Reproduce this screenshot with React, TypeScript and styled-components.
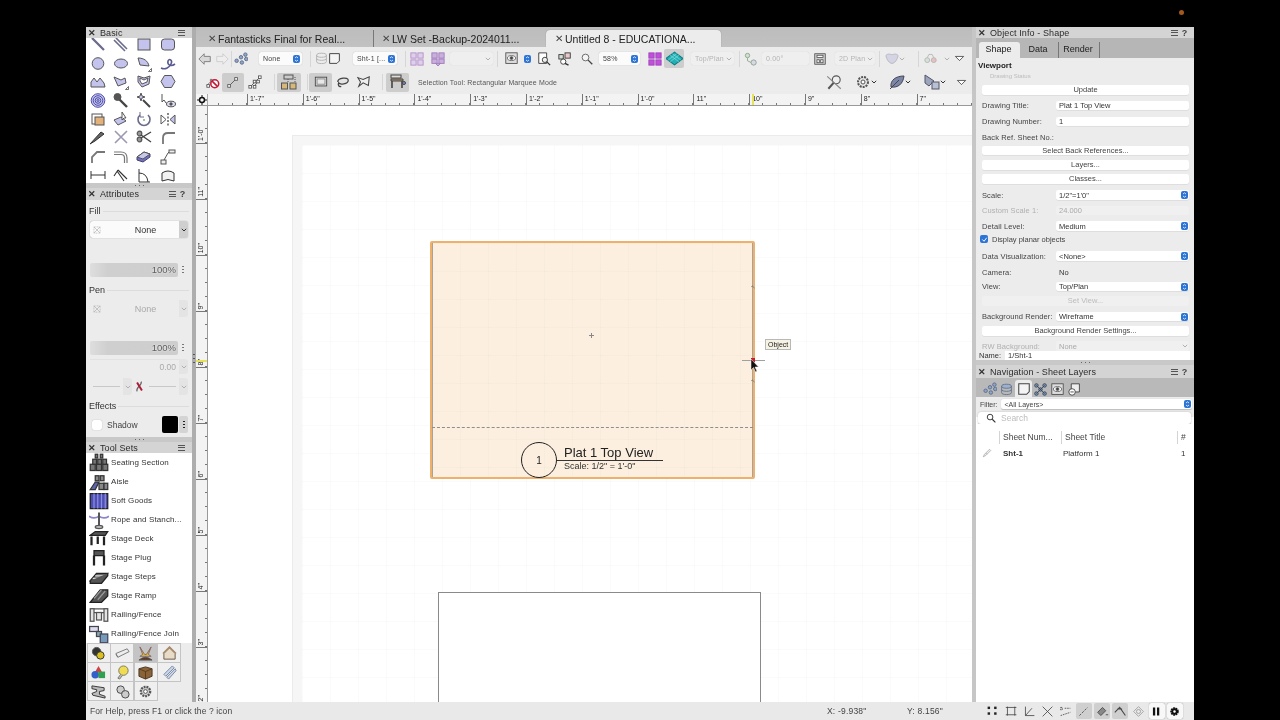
import styled, { createGlobalStyle } from "styled-components";
import type { ReactNode } from "react";

const GlobalStyle = createGlobalStyle`
    html, body {
        margin: 0;
        padding: 0;
        background: #000;
    }
    * {
        box-sizing: border-box;
    }
`;

const Screen = styled.div`
    position: relative;
    width: 1280px;
    height: 720px;
    padding: 27px 86px 0;
    background: #000;
    overflow: hidden;
    font-family: "Liberation Sans", Arial, sans-serif;
    color: #333;
    filter: blur(0.35px);
`;

const CameraDot = styled.div`
    position: absolute;
    left: 1179px;
    top: 10px;
    width: 5px;
    height: 5px;
    border-radius: 50%;
    background: #a4591c;
`;

const AppWindow = styled.div`
    display: flex;
    flex-direction: column;
    height: 693px;
`;

const Workspace = styled.div`
    display: flex;
    height: 675px;
`;

const LeftDock = styled.div`
    display: flex;
    flex-direction: column;
    width: 106px;
    background: #ececec;
`;

const Gutter = styled.div<{ $dark?: boolean }>`
    position: relative;
    width: 4px;
    background: ${(p) => (p.$dark ? "#adadad" : "#c6c6c6")};
`;

const GutterGrip = styled.div<{ $top: number }>`
    position: absolute;
    top: ${(p) => p.$top}px;
    left: 1px;
    width: 2px;
    height: 12px;
    background: repeating-linear-gradient(to bottom, #555 0 1px, transparent 1px 4px);
`;

const PanelHeader = styled.div<{ $h?: number }>`
    display: flex;
    align-items: center;
    height: ${(p) => p.$h ?? 11}px;
    padding: 0 5px 0 1px;
    background: #d4d4d4;
    font-size: 9px;
    letter-spacing: 0.1px;
    color: #2c2c2c;
    flex-shrink: 0;
`;

const CloseMark = styled.span`
    width: 10px;
    font-size: 9px;
    font-weight: bold;
    text-align: center;
    margin-right: 3px;
    color: #333;
`;

const HeaderTitle = styled.span`
    flex: 1;
    white-space: nowrap;
`;

const MenuBars = styled.span`
    width: 7px;
    height: 6px;
    margin-right: 2px;
    border-top: 1px solid #555;
    border-bottom: 1px solid #555;
    position: relative;
    &::after {
        content: "";
        position: absolute;
        left: 0;
        right: 0;
        top: 1.5px;
        height: 1px;
        background: #555;
    }
`;

const HelpMark = styled.span`
    width: 9px;
    font-size: 9px;
    font-weight: bold;
    text-align: center;
    color: #444;
`;

const Splitter = styled.div<{ $h?: number }>`
    display: flex;
    align-items: center;
    justify-content: center;
    height: ${(p) => p.$h ?? 5}px;
    background: #c8c8c8;
    flex-shrink: 0;
    &::after {
        content: "";
        width: 9px;
        height: 1px;
        background: repeating-linear-gradient(to right, #666 0 1px, transparent 1px 4px);
    }
`;

const ToolGrid = styled.div`
    display: grid;
    grid-template-columns: repeat(4, 23.4px);
    grid-auto-rows: 18.7px;
    height: 145px;
    background: #fff;
    overflow: hidden;
`;

const ToolCell = styled.div`
    display: flex;
    justify-content: center;
    align-items: flex-start;
    margin-top: -1px;
`;

const AttrBody = styled.div`
    height: 237px;
    padding: 0 4px;
    background: #ececec;
`;

const SectionTitle = styled.div<{ $mt: number }>`
    display: flex;
    align-items: center;
    gap: 2px;
    height: 12px;
    margin: ${(p) => p.$mt}px -1px 0;
    font-size: 9px;
    color: #333;
    &::after {
        content: "";
        flex: 1;
        height: 1px;
        background: #dcdcdc;
    }
`;

const AttrSelect = styled.div<{ $mt: number; $off?: boolean }>`
    display: flex;
    align-items: center;
    height: 17px;
    margin-top: ${(p) => p.$mt}px;
    border-radius: 3px;
    background: ${(p) => (p.$off ? "#ececec" : "#fbfbfb")};
    box-shadow: ${(p) => (p.$off ? "none" : "0 0 1px rgba(0,0,0,.45)")};
    font-size: 9px;
    color: ${(p) => (p.$off ? "#aaa" : "#333")};
`;

const SwatchMark = styled.div`
    display: flex;
    justify-content: center;
    width: 14px;
`;

const AttrValue = styled.span`
    flex: 1;
    padding-left: 8px;
    text-align: center;
`;

const ChevronBox = styled.div<{ $off?: boolean }>`
    display: flex;
    align-items: center;
    justify-content: center;
    width: 9px;
    height: 100%;
    border-radius: 0 3px 3px 0;
    background: ${(p) => (p.$off ? "#e4e4e4" : "#cfcfcf")};
`;

const OpacityRow = styled.div<{ $mt: number }>`
    display: flex;
    align-items: center;
    height: 14px;
    margin-top: ${(p) => p.$mt}px;
`;

const OpacityBar = styled.div`
    flex: 1;
    height: 14px;
    padding-right: 2px;
    background: linear-gradient(to right, #dedede, #cfcfcf 20%, #cecece);
    border-radius: 2px;
    font-size: 9.5px;
    line-height: 14px;
    text-align: right;
    color: #5c5c5c;
    text-shadow: 0 0 2px #fff;
`;

const VDots = styled.div`
    display: flex;
    justify-content: center;
    width: 10px;
    height: 8px;
    &::after {
        content: "";
        width: 2px;
        height: 8px;
        background: repeating-linear-gradient(to bottom, #777 0 1.5px, transparent 1.5px 3px);
    }
`;

const ValueRow = styled.div`
    display: flex;
    align-items: center;
    height: 15px;
    margin-top: 4px;
    font-size: 8.5px;
    color: #aaa;
`;

const ValueText = styled.div`
    flex: 1;
    height: 100%;
    padding-right: 3px;
    line-height: 15px;
    text-align: right;
    border-top: 1px solid #e2e2e2;
`;

const LineRow = styled.div`
    display: flex;
    align-items: center;
    height: 17px;
    margin-top: 4px;
`;

const LineSample = styled.div`
    flex: 1;
    height: 1px;
    margin: 0 3px;
    background: #c8c8c8;
`;

const ShadowRow = styled.div`
    display: flex;
    align-items: center;
    height: 17px;
    margin-top: 4px;
    font-size: 8.5px;
    color: #444;
`;

const FakeCheck = styled.div`
    width: 10px;
    height: 10px;
    margin: 0 5px 0 2px;
    border-radius: 2px;
    background: #fff;
    box-shadow: 0 0 1px rgba(0, 0, 0, 0.35);
`;

const BlackSwatch = styled.div`
    width: 16px;
    height: 17px;
    margin-left: auto;
    margin-right: 1px;
    border-radius: 2px;
    background: #000;
`;

const DotsBox = styled.div`
    display: flex;
    align-items: center;
    justify-content: center;
    width: 9px;
    height: 17px;
    background: #d4d4d4;
    border-radius: 2px;
    &::after {
        content: "";
        width: 2px;
        height: 8px;
        background: repeating-linear-gradient(to bottom, #222 0 1.5px, transparent 1.5px 3px);
    }
`;

const ToolSetList = styled.div`
    height: 190px;
    background: #fff;
    padding-left: 3px;
`;

const ToolSetRow = styled.div`
    display: flex;
    align-items: center;
    gap: 2px;
    height: 19px;
    font-size: 8px;
    letter-spacing: 0.12px;
    color: #333;
    white-space: nowrap;
`;

const SetGrid = styled.div`
    display: grid;
    grid-template-columns: repeat(4, 23.4px);
    grid-auto-rows: 19px;
    padding-left: 1px;
    background: #ececec;
    flex: 1;
`;

const SetCell = styled.div<{ $on?: boolean }>`
    display: flex;
    align-items: center;
    justify-content: center;
    border: 1px solid #c4c4c4;
    margin: 0 -0.5px -1px 0;
    background: ${(p) => (p.$on ? "#c4c4c4" : "#efefef")};
`;

const Center = styled.div`
    display: flex;
    flex-direction: column;
    width: 776px;
`;

const TabStrip = styled.div`
    display: flex;
    align-items: flex-end;
    height: 20px;
    background: linear-gradient(to bottom, #bcbcbc, #c2c2c2);
    flex-shrink: 0;
`;

const DocTab = styled.div<{ $w: number; $pl: number; $on?: boolean; $sep?: boolean }>`
    display: flex;
    align-items: center;
    gap: 2px;
    width: ${(p) => p.$w}px;
    height: 17px;
    padding-left: ${(p) => p.$pl}px;
    font-size: 10.5px;
    color: #222;
    white-space: nowrap;
    background: ${(p) => (p.$on ? "#ececec" : "transparent")};
    border-radius: ${(p) => (p.$on ? "4px 4px 0 0" : "0")};
    border-left: ${(p) => (p.$sep ? "1px solid #777" : "none")};
    box-shadow: ${(p) => (p.$on ? "0 0 1px #777" : "none")};
`;

const TabClose = styled.span`
    font-size: 10px;
    color: #444;
`;

const ToolBar = styled.div<{ $h: number }>`
    display: flex;
    align-items: center;
    height: ${(p) => p.$h}px;
    background: #ececec;
    flex-shrink: 0;
`;

const Slot = styled.div<{ $w: number; $ml?: number; $on?: boolean }>`
    display: flex;
    align-items: center;
    justify-content: center;
    flex-shrink: 0;
    width: ${(p) => p.$w}px;
    height: 19px;
    margin-left: ${(p) => p.$ml ?? 0}px;
    border-radius: 2px;
    background: ${(p) => (p.$on ? "#cdcdcd" : "transparent")};
`;

const BarSep = styled.div<{ $ml: number }>`
    width: 1px;
    height: 16px;
    margin-left: ${(p) => p.$ml}px;
    background: #d6d6d6;
    flex-shrink: 0;
`;

const BarSelect = styled.div<{ $w: number; $ml?: number; $off?: boolean }>`
    display: flex;
    align-items: center;
    justify-content: space-between;
    flex-shrink: 0;
    width: ${(p) => p.$w}px;
    height: 13px;
    margin-left: ${(p) => p.$ml ?? 0}px;
    padding: 0 2px 0 4px;
    border-radius: 2px;
    background: ${(p) => (p.$off ? "#efefef" : "#fbfbfb")};
    box-shadow: 0 0 1px rgba(0, 0, 0, ${(p) => (p.$off ? 0.15 : 0.3)});
    font-size: 7px;
    letter-spacing: 0.2px;
    color: ${(p) => (p.$off ? "#b4b4b4" : "#444")};
    white-space: nowrap;
`;

const HintText = styled.span`
    margin-left: 9px;
    font-size: 7px;
    letter-spacing: 0.12px;
    color: #555;
    white-space: nowrap;
`;

const RightTools = styled.div`
    display: flex;
    align-items: center;
    margin-left: auto;
    padding-right: 4px;
`;

const BlueBox = styled.span`
    display: flex;
    align-items: center;
    justify-content: center;
    width: 7px;
    height: 8px;
    border-radius: 2px;
    background: #2c74d6;
`;

const HRulerRow = styled.div`
    position: relative;
    display: flex;
    height: 12px;
    background: #f3f3f3;
    border-bottom: 1px solid #999;
    flex-shrink: 0;
`;

const OriginBox = styled.div`
    display: flex;
    align-items: center;
    justify-content: center;
    width: 12px;
    flex-shrink: 0;
    background: #f6f6f6;
    border-right: 1px solid #aaa;
`;

const HRulerTrack = styled.div`
    display: flex;
    flex: 1;
    overflow: hidden;
`;

const HRulerCell = styled.div<{ $w?: number; $bare?: boolean }>`
    flex: 0 0 ${(p) => p.$w ?? 55.8}px;
    padding-left: 2px;
    border-left: ${(p) => (p.$bare ? "none" : "1px solid #777")};
    font-size: 7px;
    line-height: 9px;
    color: #222;
    background: repeating-linear-gradient(to left, #777 0 1px, transparent 1px 14px) bottom / 100% 2px no-repeat;
`;

const RulerMarker = styled.div`
    position: absolute;
    left: 556px;
    top: 0;
    width: 2px;
    height: 100%;
    background: #e6e35a;
`;

const DrawArea = styled.div`
    display: flex;
    flex: 1;
    min-height: 0;
`;

const VRuler = styled.div`
    position: relative;
    display: flex;
    flex-direction: column;
    width: 12px;
    flex-shrink: 0;
    background: #f3f3f3;
    border-right: 1px solid #999;
    overflow: hidden;
`;

const VRulerCell = styled.div<{ $h?: number }>`
    display: flex;
    flex-direction: column;
    justify-content: flex-end;
    align-items: flex-start;
    flex: 0 0 ${(p) => p.$h ?? 56}px;
    border-bottom: 1px solid #777;
    background: repeating-linear-gradient(to top, #777 0 1px, transparent 1px 14px) right / 2px 100% no-repeat;
`;

const VRulerLabel = styled.span`
    writing-mode: vertical-rl;
    transform: rotate(180deg);
    font-size: 7px;
    line-height: 9px;
    color: #222;
    margin-bottom: 2px;
`;

const VRulerMarker = styled.div`
    position: absolute;
    top: 254px;
    left: 0;
    width: 100%;
    height: 2px;
    background: #e6e35a;
`;

const Canvas = styled.div`
    position: relative;
    flex: 1;
    background: #fff;
    overflow: hidden;
`;

const gridBg = `
    linear-gradient(to right, rgba(120,120,120,.03) 1px, transparent 1px) 0 0 / 28px 28px,
    linear-gradient(to bottom, rgba(120,120,120,.03) 1px, transparent 1px) 0 0 / 28px 28px
`;

const PageMargin = styled.div`
    position: absolute;
    left: 84px;
    top: 29px;
    width: 900px;
    height: 700px;
    background: #f6f6f6;
    border: 1px solid #ebebeb;
`;

const PageSheet = styled.div`
    position: absolute;
    inset: 9px;
    background: ${gridBg}, #fff;
`;

const Viewport = styled.div`
    position: absolute;
    left: 222px;
    top: 135px;
    display: flex;
    flex-direction: column;
    width: 325px;
    height: 238px;
    background: ${gridBg}, #fcefdf;
    border: 2px solid #eeb06a;
    border-radius: 2px;
    box-shadow: inset 1px 0 0 #a8a29a, inset -1px 0 0 #a8a29a;
`;

const ViewportCrop = styled.div`
    height: 185px;
    border-bottom: 1px dashed #8e8e8e;
    flex-shrink: 0;
`;

const TitleBlock = styled.div`
    display: flex;
    align-items: flex-end;
    flex: 1;
    padding-left: 89px;
`;

const Bubble = styled.div`
    display: flex;
    align-items: center;
    justify-content: center;
    width: 36px;
    height: 36px;
    margin-bottom: -1px;
    border: 1px solid #222;
    border-radius: 50%;
    font-size: 10px;
    color: #222;
    flex-shrink: 0;
`;

const TitleText = styled.div`
    display: flex;
    flex-direction: column;
    width: 106px;
    margin-bottom: 6px;
`;

const TitleMain = styled.div`
    padding-left: 7px;
    border-bottom: 1.5px solid #333;
    font-size: 13px;
    line-height: 14px;
    color: #222;
    white-space: nowrap;
`;

const TitleScale = styled.div`
    padding-left: 7px;
    font-size: 9px;
    line-height: 10px;
    color: #333;
    white-space: nowrap;
`;

const CenterCross = styled.div`
    position: absolute;
    left: 381px;
    top: 227px;
    width: 5px;
    height: 5px;
    background: linear-gradient(#888, #888) center / 100% 1px no-repeat, linear-gradient(#888, #888) center / 1px 100% no-repeat;
`;

const OutlineSheet = styled.div`
    position: absolute;
    left: 230px;
    top: 486px;
    width: 323px;
    height: 300px;
    border: 1px solid #8a8a8a;
    background: #fff;
`;

const SnapLine = styled.div`
    position: absolute;
    left: 534px;
    top: 254px;
    width: 23px;
    height: 1px;
    background: #a0a0a0;
`;

const SnapPoint = styled.div`
    position: absolute;
    left: 543px;
    top: 252px;
    width: 4px;
    height: 4px;
    background: #c8202a;
`;

const HandleTick = styled.div<{ $top: number }>`
    position: absolute;
    left: 542px;
    top: ${(p) => p.$top}px;
    width: 6px;
    height: 3px;
    border: 1px solid #777;
    border-right: none;
    border-bottom: none;
    transform: rotate(45deg) scale(0.6);
`;

const CursorMark = styled.div`
    position: absolute;
    left: 542px;
    top: 253px;
    line-height: 0;
`;

const SnapTip = styled.div`
    position: absolute;
    left: 557px;
    top: 233px;
    height: 11px;
    padding: 0 2px;
    background: #f7f3e4;
    border: 1px solid #b8b8b8;
    font-size: 7px;
    line-height: 9px;
    color: #222;
`;

const RightDock = styled.div`
    display: flex;
    flex-direction: column;
    width: 218px;
    background: #ececec;
`;

const TabRow = styled.div`
    display: flex;
    align-items: flex-end;
    height: 20px;
    padding-left: 3px;
    background: #b6b6b6;
    flex-shrink: 0;
`;

const PanelTab = styled.div<{ $w: number; $on?: boolean; $sep?: boolean }>`
    width: ${(p) => p.$w}px;
    height: 16px;
    padding-right: 2px;
    font-size: 9px;
    line-height: 15px;
    text-align: center;
    color: #222;
    background: ${(p) => (p.$on ? "#ececec" : "transparent")};
    border-radius: ${(p) => (p.$on ? "3px 3px 0 0" : "0")};
    border-right: ${(p) => (p.$sep ? "1px solid #777" : "none")};
`;

const InfoBody = styled.div`
    height: 293px;
    padding: 2px 5px 0 6px;
    overflow: hidden;
    flex-shrink: 0;
`;

const InfoHeading = styled.div`
    height: 12px;
    margin-left: -4px;
    font-size: 8px;
    font-weight: bold;
    line-height: 12px;
    color: #222;
`;

const InfoFaded = styled.div`
    height: 8px;
    margin-left: 8px;
    font-size: 6px;
    line-height: 8px;
    color: #bbb;
`;

const InfoRow = styled.div<{ $gap: number }>`
    display: flex;
    align-items: center;
    height: 12px;
    margin-top: ${(p) => p.$gap}px;
    font-size: 7.5px;
    color: #444;
    white-space: nowrap;
`;

const InfoLabel = styled.div<{ $off?: boolean }>`
    width: 74px;
    flex-shrink: 0;
    letter-spacing: 0.1px;
    color: ${(p) => (p.$off ? "#b0b0b0" : "#444")};
`;

const InfoField = styled.div<{ $off?: boolean; $plain?: boolean }>`
    display: flex;
    align-items: center;
    justify-content: space-between;
    flex: 1;
    height: 9.5px;
    padding: 0 1px 0 3px;
    background: ${(p) => (p.$plain ? "transparent" : p.$off ? "#f0f0f0" : "#fff")};
    border-radius: 2px;
    box-shadow: ${(p) => (p.$plain || p.$off ? "none" : "0 0.5px 0.5px rgba(0,0,0,.12)")};
    color: ${(p) => (p.$off ? "#aaa" : "#333")};
`;

const InfoButton = styled.div<{ $off?: boolean }>`
    flex: 1;
    height: 9.5px;
    background: ${(p) => (p.$off ? "#f0f0f0" : "#fff")};
    border-radius: 2px;
    box-shadow: ${(p) => (p.$off ? "none" : "0 0.5px 0.5px rgba(0,0,0,.12)")};
    line-height: 9.5px;
    text-align: center;
    color: ${(p) => (p.$off ? "#bbb" : "#444")};
`;

const CheckBox = styled.div`
    display: flex;
    align-items: center;
    justify-content: center;
    width: 8px;
    height: 8px;
    margin: 0 4px 0 -2px;
    border-radius: 2px;
    background: #2c74d6;
`;

const NameRow = styled.div`
    display: flex;
    align-items: center;
    height: 9px;
    padding: 0 4px 0 3px;
    background: #ececec;
    font-size: 7.5px;
    color: #333;
    flex-shrink: 0;
`;

const NameField = styled.div`
    flex: 1;
    height: 9px;
    margin-left: 4px;
    padding-left: 3px;
    background: #fff;
    line-height: 9px;
`;

const NavToolbar = styled.div`
    display: flex;
    align-items: flex-end;
    height: 19px;
    padding-left: 5px;
    background: #b9b9b9;
    flex-shrink: 0;
`;

const NavTab = styled.div<{ $on?: boolean }>`
    display: flex;
    align-items: center;
    justify-content: center;
    width: 17px;
    height: 17px;
    padding-top: 1px;
    border-radius: 3px 3px 0 0;
    background: ${(p) => (p.$on ? "#ececec" : "transparent")};
`;

const FilterRow = styled.div`
    display: flex;
    align-items: center;
    height: 14px;
    padding: 0 2px 0 4px;
    font-size: 7px;
    color: #444;
    flex-shrink: 0;
`;

const FilterSelect = styled.div`
    display: flex;
    align-items: center;
    justify-content: space-between;
    flex: 1;
    height: 10px;
    margin-left: 3px;
    padding: 0 1px 0 4px;
    background: #fff;
    border-radius: 2px;
    box-shadow: 0 0.5px 1px rgba(0, 0, 0, 0.2);
`;

const NavList = styled.div`
    flex: 1;
    background: #fff;
`;

const SearchWrap = styled.div`
    padding: 1px 3px 0 2px;
    background: linear-gradient(to bottom, #ececec 50%, #fff 50%);
`;

const SearchBox = styled.div`
    display: flex;
    align-items: center;
    gap: 5px;
    height: 12px;
    padding-left: 8px;
    background: #fff;
    border-radius: 3px;
    box-shadow: 0 0.5px 1.5px rgba(0, 0, 0, 0.3);
    font-size: 8.5px;
    color: #bdbdbd;
`;

const TableHead = styled.div`
    display: flex;
    align-items: center;
    height: 13px;
    margin-top: 7px;
    font-size: 8.5px;
    color: #444;
`;

const HeadCell = styled.div<{ $w: number; $sep?: boolean }>`
    width: ${(p) => p.$w}px;
    height: 13px;
    padding-left: 3px;
    line-height: 13px;
    border-left: ${(p) => (p.$sep ? "1px solid #d4d4d4" : "none")};
    white-space: nowrap;
`;

const TableRow = styled.div`
    display: flex;
    align-items: center;
    height: 12px;
    margin-top: 3px;
    font-size: 8px;
    color: #333;
`;

const RowCell = styled.div<{ $w: number; $bold?: boolean; $pl?: number }>`
    display: flex;
    width: ${(p) => p.$w}px;
    padding-left: ${(p) => p.$pl ?? 3}px;
    font-weight: ${(p) => (p.$bold ? "bold" : "normal")};
    white-space: nowrap;
`;

const StatusBar = styled.div`
    display: flex;
    align-items: center;
    height: 18px;
    padding: 0 9px 0 4px;
    background: #e9e9e9;
    font-size: 8.5px;
    letter-spacing: 0.1px;
    color: #444;
    flex-shrink: 0;
`;

const StatusRight = styled.div`
    display: flex;
    align-items: center;
    margin-left: auto;
`;

const Coord = styled.div<{ $w: number }>`
    width: ${(p) => p.$w}px;
    font-size: 8.5px;
    letter-spacing: 0.2px;
    white-space: nowrap;
`;

const SnapButton = styled.div<{ $on?: boolean; $box?: boolean }>`
    display: flex;
    align-items: center;
    justify-content: center;
    width: 16px;
    height: 16px;
    margin-right: 2.2px;
    border-radius: 2px;
    background: ${(p) => (p.$box ? "#f8f8f8" : p.$on ? "#cfcfcf" : "transparent")};
    box-shadow: ${(p) => (p.$box ? "0 0 1px rgba(0,0,0,.5)" : "none")};
`;

const IconSvg = styled.svg.attrs({ fill: "none", stroke: "#555" })<{ $s: number }>`
    display: block;
    width: ${(p) => p.$s}px;
    height: ${(p) => p.$s}px;
    flex-shrink: 0;
`;

const L = "#c4c3ee";
const tri = <path d="M12.5 15.5H15.5V12.5Z" fill="#fff" stroke="#333" strokeWidth=".7" />;

const glyphs: Record<string, ReactNode> = {
    line: <path d="M2 1 14 13" stroke="#6b6b8c" strokeWidth="2.2" />,
    dline: <path d="M3 1 14 12M1 3 12 14" stroke="#6b6b8c" strokeWidth="1.6" />,
    rect: <rect x="2" y="2" width="12" height="11" fill={L} />,
    rrect: <rect x="1.5" y="2" width="13" height="11" rx="3" fill={L} />,
    circle: <circle cx="8" cy="7.5" r="5.8" fill={L} />,
    ellipse: <ellipse cx="8" cy="7.5" rx="6.5" ry="4.5" fill={L} />,
    wedge: <g><path d="M2 2C8 2 12 5 13 10L4 9Z" fill={L} />{tri}</g>,
    curl: <path d="M1 12C5 14 9 12 11 8 13 4 9 2 8 5 7 9 11 11 15 8" stroke="#5a5a90" strokeWidth="1.6" />,
    mount: <path d="M1 13V8L4 4 7 8 10 4 14 9 15 13Z" fill={L} />,
    poly: <g><path d="M1 3 8 6 12 4 13 9 5 12Z" fill={L} />{tri}</g>,
    dpoly: <g><path d="M2 2 8 4 14 2 13 10 6 13 2 8Z" fill={L} /><path d="M4 4 8 6 12 4 11 8 6 10 4 7Z" fill="#fff" /></g>,
    hex: <path d="M4.5 1.5h7L15 7.5 11.5 13.5h-7L1 7.5Z" fill={L} />,
    spiral: <g stroke="#4d4da8"><circle cx="8" cy="7.5" r="6.8" fill={L} /><circle cx="8" cy="7.5" r="4.8" /><circle cx="8" cy="7.5" r="2.8" /><circle cx="8" cy="7.5" r="1" /></g>,
    mic: <g><path d="M6 6 14 14" stroke="#444" strokeWidth="2.4" /><circle cx="4.5" cy="4" r="3.5" fill="#555" /></g>,
    wand: <g><path d="M7 7 14 14" stroke="#444" strokeWidth="2" /><path d="M5 0 6 3 9 4 6 5 5 8 4 5 1 4 4 3Z" fill={L} /></g>,
    eye: <g><path d="M2 1V9L4 7 6 10" fill="#fff" /><ellipse cx="11" cy="11" rx="4.5" ry="2.8" fill="#dde" /><circle cx="11" cy="11" r="1.2" fill="#446" /></g>,
    boxo: <g><rect x="2" y="2" width="10" height="10" /><rect x="5" y="5" width="9" height="8" fill="#e3b17a" /></g>,
    polyc: <g><path d="M1 8 8 5 13 9 5 13Z" fill={L} /><path d="M9 0V8L11 6 13 6Z" fill="#fff" /></g>,
    rotate: <g><path d="M4 3a6 6 0 1 0 8 0" stroke="#6b6b8c" strokeWidth="1.6" /><path d="M4 0V5H8" stroke="#6b6b8c" /><circle cx="8" cy="8" r="1" fill="#8a8" stroke="none" /></g>,
    mirror: <g><path d="M1 3 6 7.5 1 12Z" fill="#fff" /><path d="M15 3 10 7.5 15 12Z" fill={L} /><path d="M8 1V14" strokeDasharray="2 1.5" strokeWidth="1.4" /></g>,
    knife: <path d="M0 14 11 2 14 4 5 11Z" fill="#666" stroke="#333" />,
    cross: <path d="M2 1 14 13M14 1 2 13" stroke="#9a9ab0" strokeWidth="1.6" />,
    scissors: <g strokeWidth="1.2"><circle cx="3.5" cy="3.5" r="2.3" fill="#999" /><circle cx="3.5" cy="9.5" r="2.3" fill="#999" /><path d="M5 5 15 12M5 8 15 2" stroke="#444" strokeWidth="1.4" /></g>,
    fillet: <path d="M3 14V8Q3 3 8 3H15" stroke="#777" strokeWidth="1.8" />,
    chamfer: <path d="M2 14V8L7 3H15" stroke="#777" strokeWidth="1.8" />,
    dfillet: <path d="M1 3H8Q14 3 14 9V14M1 5.5H8Q11.5 5.5 11.5 9V14" stroke="#777" strokeWidth="1.2" />,
    eraser: <g><path d="M1 8 8 3 14 5 14 8 7 13 1 11Z" fill="#6f6fc8" stroke="#446" /><path d="M1 8 7 10 14 5 8 3Z" fill="#c8c8e8" /></g>,
    connect: <g><rect x="9" y="1" width="6" height="3" fill="#eee" /><rect x="1" y="11" width="5" height="4" fill="#eee" /><path d="M4 11 8 4 9 3" /></g>,
    dim: <path d="M1 3V11M15 3V11M1 7H15" stroke="#333" />,
    adim: <path d="M1 8 5 2M5 2 14 11M4 3 11 13" stroke="#333" strokeWidth="1.1" />,
    ang: <path d="M3 14V1M3 14H14M3 5Q11 5 12 14" stroke="#333" />,
    arcd: <path d="M2 13V5Q8 1 14 5V13Q8 10 2 13Z" stroke="#333" fill="#f2f2f2" />,
    back: <path d="M1 8 7 2V5H14V11H7V14Z" fill="#d8d8d8" stroke="#777" />,
    fwd: <path d="M15 8 9 2V5H2V11H9V14Z" fill="#eee" stroke="#ccc" />,
    mole: <g stroke="#5b6c88" fill="#8ea4c8"><circle cx="3" cy="10" r="2" /><circle cx="8" cy="6" r="2" /><circle cx="13" cy="3" r="2" /><circle cx="9" cy="12" r="2" /><circle cx="14" cy="8" r="2" /></g>,
    stack: <g stroke="#aaa"><ellipse cx="8" cy="4" rx="6" ry="2.5" /><path d="M2 4V12C2 15 14 15 14 12V4M2 8C2 11 14 11 14 8" /></g>,
    sheet: <path d="M2 2H14V11L11 14H2Z" fill="#f4f4f4" stroke="#444" strokeWidth="1.2" />,
    pgrid: <g stroke="#b48cc8" fill="#ddd0ea"><rect x="1" y="1" width="6" height="6" /><rect x="9" y="1" width="6" height="6" /><rect x="1" y="9" width="6" height="6" /><rect x="9" y="9" width="6" height="6" /></g>,
    pgridDown: <g stroke="#a078bc" fill="#c8b0dc"><rect x="1" y="1" width="6" height="6" /><rect x="9" y="1" width="6" height="6" /><rect x="1" y="8" width="6" height="5" /><rect x="9" y="8" width="6" height="5" /><path d="M5 13H11L8 16Z" /></g>,
    eyeBox: <g><rect x="1" y="1" width="14" height="13" fill="#ddd" stroke="#444" /><ellipse cx="8" cy="7.5" rx="5" ry="3" fill="#fff" /><circle cx="8" cy="7.5" r="1.8" fill="#444" /></g>,
    docSearch: <g stroke="#333"><path d="M2 1H11V13H2Z" fill="#fff" /><circle cx="9" cy="9" r="3" fill="#eee" /><path d="M11 11 15 15" strokeWidth="1.5" /></g>,
    peopleSearch: <g stroke="#333"><rect x="1" y="3" width="5" height="5" fill="#cfe0cf" /><rect x="8" y="1" width="6" height="6" fill="#e8c8c8" /><circle cx="6" cy="11" r="3" fill="#fff" /><path d="M8 13 12 15" strokeWidth="1.5" /></g>,
    magnify: <g stroke="#444"><circle cx="6" cy="6" r="4.5" fill="#f4f4f4" /><path d="M9.5 9.5 15 15" strokeWidth="1.8" /></g>,
    purple: <g stroke="#a040c0" fill="#c050d8"><rect x="1" y="1" width="6" height="6" /><rect x="9" y="1" width="6" height="6" /><rect x="1" y="9" width="6" height="6" /><rect x="9" y="9" width="6" height="6" /></g>,
    diamond: <g stroke="#0c7f86"><path d="M8 2 16 8 8 14 0 8Z" fill="#22b0b4" /><path d="M4 5 12 11M12 5 4 11M6 3.5 14 9.5M10 3.5 2 9.5" stroke="#8fe0e2" strokeWidth=".6" /></g>,
    phone: <g stroke="#8aa08a"><circle cx="4" cy="4" r="2.5" fill="#cfe0cf" /><circle cx="11" cy="12" r="3" fill="#d8d8e4" /><path d="M4 7V10L8 12" /></g>,
    plan2d: <g stroke="#444"><rect x="1" y="1" width="14" height="14" fill="#ccc" /><rect x="4" y="3" width="8" height="3" fill="#fff" /><rect x="4" y="9" width="3" height="4" fill="#fff" /><rect x="9" y="9" width="3" height="4" fill="#fff" /></g>,
    cloud: <path d="M1 4C4 1 6 3 8 3S12 1 15 4C14 9 11 13 8 13S2 9 1 4Z" fill="#d4d4e2" stroke="#b4b4c4" />,
    glasses: <g stroke="#b0b0b0"><circle cx="4" cy="10" r="3" fill="#d4e4d4" /><circle cx="12" cy="10" r="3" fill="#e8c0c0" /><path d="M4 7 6 3H10L12 7" /></g>,
    triDown: <path d="M2 5H14L8 11Z" fill="#fff" stroke="#333" strokeWidth="1.1" />,
    noPoly: <g><path d="M1 12 6 7M5 5h2v2H5Z" stroke="#666" /><rect x="1" y="11" width="3" height="3" fill="#fff" /><circle cx="10" cy="10" r="4.5" fill="#fff" stroke="#c41a36" strokeWidth="1.8" /><path d="M7 7 13 13" stroke="#c41a36" strokeWidth="1.8" /></g>,
    onePoly: <g stroke="#555" fill="#fff"><path d="M4 12 11 5" /><rect x="2" y="11" width="3" height="3" /><rect x="10" y="3" width="3" height="3" /></g>,
    manyPoly: <g stroke="#555" fill="#fff"><path d="M3 13 8 8 13 3M7 13 11 8" /><rect x="1" y="12" width="3" height="3" /><rect x="6" y="12" width="3" height="3" /><rect x="6" y="6" width="3" height="3" /><rect x="10" y="6" width="3" height="3" /><rect x="12" y="1" width="3" height="3" /></g>,
    objects: <g stroke="#555"><rect x="3" y="1" width="9" height="4" fill="#ccc" /><rect x=".5" y="9" width="6" height="6" fill="#d8b878" /><rect x="9" y="9" width="6" height="6" fill="#d8b878" /><path d="M7 5V9M14 3V9" strokeDasharray="1 1" /></g>,
    marquee: <g><rect x="1.5" y="2.5" width="13" height="10" fill="#dcdcdc" stroke="#444" /><rect x="3.5" y="4.5" width="9" height="6" fill="#e8e8e8" stroke="#888" /></g>,
    lasso: <path d="M2 8C2 3 14 2 14 6 14 11 4 11 3 9 2 11 3 14 6 13" fill="#e4e4e4" stroke="#444" strokeWidth="1.4" />,
    polyMq: <path d="M1 3 7 5 14 2 13 12 7 9 2 13 4 8Z" fill="#eee" stroke="#444" strokeWidth="1.2" />,
    deckSel: <g stroke="#444"><path d="M1 5H13V7H1Z" fill="#b89468" /><path d="M2 7V14M12 7V14" strokeWidth="1.6" /><rect x="1" y="1" width="10" height="3" fill="#ddd" /><circle cx="14" cy="9" r="1.5" fill="#79c" /></g>,
    zoomOff: <g stroke="#555"><path d="M3 14 11 5" strokeWidth="1.8" /><circle cx="10" cy="6" r="3.5" fill="#eee" /><path d="M2 3 14 14" stroke="#888" /></g>,
    gear: <g stroke="#555"><circle cx="8" cy="8" r="5" fill="#e4e4e4" strokeDasharray="2 1" strokeWidth="2" /><circle cx="8" cy="8" r="2" fill="#fff" /></g>,
    leaf: <g stroke="#445"><path d="M2 13C1 6 7 2 15 2 14 10 9 14 2 13Z" fill="#7b86a4" /><path d="M1 15 10 6" /></g>,
    shapeSet: <g stroke="#556"><path d="M1 1 10 7 5 12 1 9Z" fill="#9aa4bc" /><rect x="8" y="8" width="7" height="7" fill="#b8c0d4" /></g>,
    swatchX: <g stroke="#999" strokeWidth=".8"><rect x="3" y="3" width="10" height="10" strokeDasharray="1.5 1" /><path d="M3 3 13 13M13 3 3 13" /></g>,
    penBrush: <g><path d="M5 14C3 9 12 6 10 2" stroke="#666" strokeWidth="1.6" /><path d="M5 3 11 13" stroke="#b01c34" strokeWidth="2.4" /></g>,
    check: <path d="M3 8 7 12 13 4" stroke="#fff" strokeWidth="2.2" />,
    search: <g stroke="#333"><circle cx="6.5" cy="6.5" r="4.5" strokeWidth="1.5" /><path d="M10 10 15 15" strokeWidth="1.8" /></g>,
    pencilCheck: <path d="M2 14 4 10 12 2 14 4 6 12ZM6 8 8 10" stroke="#999" fill="#eee" />,
    layersNav: <g stroke="#5b6c88"><ellipse cx="8" cy="4" rx="6" ry="2.5" fill="#9fb0cc" /><path d="M2 4V12C2 15 14 15 14 12V4M2 8C2 11 14 11 14 8" /></g>,
    classesNav: <g stroke="#345" fill="#7c90b4"><circle cx="3" cy="3" r="2.2" /><circle cx="13" cy="3" r="2.2" /><circle cx="8" cy="8" r="2.2" /><circle cx="3" cy="13" r="2.2" /><circle cx="13" cy="13" r="2.2" /><path d="M3 3 13 13M13 3 3 13" /></g>,
    refNav: <g stroke="#333"><path d="M4 1H14V11H4Z" fill="#eee" /><circle cx="5" cy="11" r="4" fill="#fff" /><path d="M3 11 7 11" /></g>,
    snapGrid: <g fill="#222" stroke="none"><rect x="2" y="2" width="3" height="3" /><rect x="10" y="2" width="3" height="3" /><rect x="2" y="9" width="3" height="3" /><rect x="10" y="9" width="3" height="3" /></g>,
    snapBox: <path d="M3 2V13M12 2V13M1 3H14M1 12H14" stroke="#444" />,
    snapAngle: <path d="M3 2V13H14M3 13 11 4" stroke="#444" />,
    snapCross: <path d="M2 2 14 14M14 2 2 14" stroke="#444" />,
    snapText: <path d="M2 3H4V6H2ZM7 4H14M2 13 14 9" stroke="#444" strokeDasharray="2 1" />,
    snapLine: <path d="M3 13 13 3" stroke="#444" strokeDasharray="3 1.5" />,
    snapDiag: <path d="M2 9 8 3 12 7 6 13ZM12 12H15" stroke="#444" fill="#888" />,
    snapArc: <path d="M1 9 7 3 14 13M4 5 10 5" stroke="#444" strokeWidth="1.3" />,
    snapDia: <g stroke="#999"><path d="M8 2 14 8 8 14 2 8Z" /><circle cx="8" cy="8" r="2.5" /></g>,
    pause: <path d="M5 3V13M10 3V13" stroke="#111" strokeWidth="2.8" />,
    cog: <g stroke="#111"><circle cx="8" cy="8" r="4" fill="#111" strokeDasharray="2 .8" strokeWidth="2.5" /><circle cx="8" cy="8" r="1.5" fill="#fff" stroke="none" /></g>,
    seating: <g stroke="#333" fill="#777"><rect x="1" y="9" width="4" height="5" /><rect x="6" y="9" width="4" height="5" /><rect x="11" y="9" width="4" height="5" /><rect x="3" y="5" width="3" height="4" /><rect x="7" y="5" width="3" height="4" /><rect x="11" y="5" width="3" height="4" /><rect x="5" y="1" width="2" height="3" /><rect x="9" y="1" width="2" height="3" /></g>,
    aisle: <g stroke="#333" fill="#888"><path d="M1 14 5 8H8L5 14Z" fill="#5c66b0" /><rect x="8" y="9" width="4" height="5" /><rect x="12" y="9" width="3" height="5" /><rect x="5" y="3" width="3" height="4" /><rect x="9" y="3" width="3" height="4" /></g>,
    soft: <g><path d="M1 2H15V14H1Z" fill="#4d4fb4" stroke="#222" /><path d="M4 2V14M7 2V14M10 2V14M13 2V14" stroke="#8b8de0" /></g>,
    rope: <g stroke="#555"><path d="M0 5C3 7 5 7 8 5 11 7 13 7 16 5" stroke="#8a86c8" strokeWidth="1.4" /><path d="M8 2V13" strokeWidth="1.6" /><ellipse cx="8" cy="13.5" rx="3" ry="1.3" fill="#bbb" /></g>,
    deck: <g stroke="#222"><path d="M1 5 5 2H15L13 5Z" fill="#555" /><path d="M2 6V13M7 6V12M12 6V13" strokeWidth="1.8" /></g>,
    plug: <g stroke="#222"><path d="M4 2H12V6H4Z" fill="#555" /><path d="M4 6V14M12 6V14" strokeWidth="1.8" /></g>,
    steps: <g stroke="#222" fill="#666"><path d="M1 11 6 5H15L10 11Z" /><path d="M3 9H12M5 7H14" stroke="#ddd" /><path d="M1 11 1 13H10L15 7V5" fill="#555" /></g>,
    ramp: <g stroke="#222" fill="#555"><path d="M1 13 9 3H15V8L10 13Z" /><path d="M4 10 10 3M7 11 13 4" stroke="#999" /></g>,
    rail: <g stroke="#555" fill="#e4e4e4"><path d="M1 3H15M1 6H15" /><rect x="1" y="3" width="3" height="10" /><rect x="12" y="3" width="3" height="10" /><rect x="6" y="6" width="4" height="6" /></g>,
    join: <g stroke="#445" fill="#dde"><rect x=".5" y="2" width="7" height="4" /><rect x="6" y="6" width="4" height="4" fill="#8aa" /><rect x="9" y="8" width="6" height="7" fill="#79b" /></g>,
    spot: <g><circle cx="6" cy="6" r="4.5" fill="#333" /><circle cx="10" cy="10" r="4" fill="#d8c020" stroke="#333" /></g>,
    pipe: <g stroke="#777" fill="#eee"><path d="M1 8 13 3 15 6 3 12Z" /><path d="M1 9 3 12" /></g>,
    crown: <g><path d="M2 1 7 9H9L14 1 11 9 14 11H2L5 9Z" fill="#e0c040" stroke="#866" /><path d="M1 15Q8 9 15 15Z" fill="#603820" /></g>,
    house: <g stroke="#654"><path d="M2 8 8 2 14 8V14H2Z" fill="#e8dcc8" /><path d="M1 8 8 1 15 8" stroke="#a86" strokeWidth="1.5" /></g>,
    tricolor: <g stroke="none"><path d="M8 1 12 8H4Z" fill="#d04040" /><circle cx="4.5" cy="10.5" r="4" fill="#3060c8" /><rect x="8" y="7" width="7" height="7" fill="#30a050" /></g>,
    bulb: <g stroke="#776"><circle cx="9" cy="6" r="5" fill="#f0dc50" /><path d="M6 10 3 14 5 15 8 11" fill="#bbb" /></g>,
    box: <g stroke="#432"><path d="M1 4 8 2 15 4V12L8 15 1 12Z" fill="#8a6438" /><path d="M1 4 8 7 15 4M8 7V15" stroke="#5a3c18" /></g>,
    pipes: <g stroke="#7788a4" fill="#c8d4e8"><path d="M2 10 11 1 13 3 4 12Z" /><path d="M5 13 14 4 15 6 7 15Z" /></g>,
    beam: <path d="M1 2 14 4V7L9 8V11L15 13V15L2 12 1 10 6 8V6L1 5Z" fill="#bbb" stroke="#333" />,
    link: <g stroke="#444" fill="#ccc"><circle cx="6" cy="6" r="4" /><circle cx="11" cy="11" r="4" /></g>,
    setGear: <g stroke="#555"><circle cx="8" cy="8" r="5" fill="#ccc" strokeDasharray="2 1" strokeWidth="2.4" /><circle cx="8" cy="8" r="2" fill="#fff" /></g>,
};

const Ico = ({ n, s = 14 }: { n: string; s?: number }) => (
    <IconSvg viewBox="0 0 16 16" $s={s}>{glyphs[n]}</IconSvg>
);

const Stepper = () => (
    <BlueBox>
        <svg width="5" height="6" viewBox="0 0 5 6" fill="none" stroke="#fff" strokeWidth=".8">
            <path d="M1 2 2.5 .8 4 2M1 4 2.5 5.2 4 4" />
        </svg>
    </BlueBox>
);

const Chevron = ({ off }: { off?: boolean }) => (
    <svg width="6" height="4" viewBox="0 0 6 4" fill="none" stroke={off ? "#b0b0b0" : "#333"} strokeWidth="1">
        <path d="M.8 .8 3 3 5.2 .8" />
    </svg>
);

const basicTools = [
    "line", "dline", "rect", "rrect",
    "circle", "ellipse", "wedge", "curl",
    "mount", "poly", "dpoly", "hex",
    "spiral", "mic", "wand", "eye",
    "boxo", "polyc", "rotate", "mirror",
    "knife", "cross", "scissors", "fillet",
    "chamfer", "dfillet", "eraser", "connect",
    "dim", "adim", "ang", "arcd",
];

const toolSets = [
    { n: "seating", label: "Seating Section" },
    { n: "aisle", label: "Aisle" },
    { n: "soft", label: "Soft Goods" },
    { n: "rope", label: "Rope and Stanch..." },
    { n: "deck", label: "Stage Deck" },
    { n: "plug", label: "Stage Plug" },
    { n: "steps", label: "Stage Steps" },
    { n: "ramp", label: "Stage Ramp" },
    { n: "rail", label: "Railing/Fence" },
    { n: "join", label: "Railing/Fence Join" },
];

const setCells = ["spot", "pipe", "crown", "house", "tricolor", "bulb", "box", "pipes", "beam", "link", "setGear"];

const hLabels = ["1'-7\"", "1'-6\"", "1'-5\"", "1'-4\"", "1'-3\"", "1'-2\"", "1'-1\"", "1'-0\"", "11\"", "10\"", "9\"", "8\"", "7\""];
const vLabels = ["11\"", "10\"", "9\"", "8\"", "7\"", "6\"", "5\"", "4\"", "3\"", "2\""];

const snapButtons = [
    { n: "snapGrid" }, { n: "snapBox" }, { n: "snapAngle" }, { n: "snapCross" }, { n: "snapText" },
    { n: "snapLine", on: true }, { n: "snapDiag", on: true }, { n: "snapArc", on: true }, { n: "snapDia" },
    { n: "pause", box: true }, { n: "cog", box: true },
];

function LeftPanels() {
    return (
        <LeftDock>
            <PanelHeader>
                <CloseMark>✕</CloseMark>
                <HeaderTitle>Basic</HeaderTitle>
                <MenuBars />
            </PanelHeader>
            <ToolGrid>
                {basicTools.map((n) => (
                    <ToolCell key={n}><Ico n={n} s={16} /></ToolCell>
                ))}
            </ToolGrid>
            <Splitter />
            <PanelHeader $h={12}>
                <CloseMark>✕</CloseMark>
                <HeaderTitle>Attributes</HeaderTitle>
                <MenuBars />
                <HelpMark>?</HelpMark>
            </PanelHeader>
            <AttrBody>
                <SectionTitle $mt={5}>Fill</SectionTitle>
                <AttrSelect $mt={4}>
                    <SwatchMark><Ico n="swatchX" s={10} /></SwatchMark>
                    <AttrValue>None</AttrValue>
                    <ChevronBox><Chevron /></ChevronBox>
                </AttrSelect>
                <OpacityRow $mt={25}>
                    <OpacityBar>100%</OpacityBar>
                    <VDots />
                </OpacityRow>
                <SectionTitle $mt={7}>Pen</SectionTitle>
                <AttrSelect $mt={4} $off>
                    <SwatchMark><Ico n="swatchX" s={10} /></SwatchMark>
                    <AttrValue>None</AttrValue>
                    <ChevronBox $off><Chevron off /></ChevronBox>
                </AttrSelect>
                <OpacityRow $mt={24}>
                    <OpacityBar>100%</OpacityBar>
                    <VDots />
                </OpacityRow>
                <ValueRow>
                    <ValueText>0.00</ValueText>
                    <ChevronBox $off><Chevron off /></ChevronBox>
                </ValueRow>
                <LineRow>
                    <LineSample />
                    <ChevronBox $off><Chevron off /></ChevronBox>
                    <Slot $w={14}><Ico n="penBrush" s={13} /></Slot>
                    <LineSample />
                    <ChevronBox $off><Chevron off /></ChevronBox>
                </LineRow>
                <SectionTitle $mt={5}>Effects</SectionTitle>
                <ShadowRow>
                    <FakeCheck />
                    Shadow
                    <BlackSwatch />
                    <DotsBox />
                </ShadowRow>
            </AttrBody>
            <Splitter />
            <PanelHeader>
                <CloseMark>✕</CloseMark>
                <HeaderTitle>Tool Sets</HeaderTitle>
                <MenuBars />
            </PanelHeader>
            <ToolSetList>
                {toolSets.map((t) => (
                    <ToolSetRow key={t.n}>
                        <Ico n={t.n} s={20} />
                        {t.label}
                    </ToolSetRow>
                ))}
            </ToolSetList>
            <SetGrid>
                {setCells.map((n) => (
                    <SetCell key={n} $on={n === "crown"}><Ico n={n} s={15} /></SetCell>
                ))}
            </SetGrid>
        </LeftDock>
    );
}

function TopBars() {
    return (
        <>
            <TabStrip>
                <DocTab $w={177} $pl={12}><TabClose>✕</TabClose>Fantasticks Final for Real...</DocTab>
                <DocTab $w={173} $pl={8} $sep><TabClose>✕</TabClose>LW Set -Backup-2024011...</DocTab>
                <DocTab $w={175} $pl={9} $on><TabClose>✕</TabClose>Untitled 8 - EDUCATIONA...</DocTab>
            </TabStrip>
            <ToolBar $h={23}>
                <Slot $w={18}><Ico n="back" /></Slot>
                <Slot $w={16}><Ico n="fwd" /></Slot>
                <BarSep $ml={1} />
                <Slot $w={18}><Ico n="mole" /></Slot>
                <BarSelect $w={43} $ml={9}>None<Stepper /></BarSelect>
                <BarSep $ml={8} />
                <Slot $w={14} $ml={3}><Ico n="stack" s={13} /></Slot>
                <Slot $w={12}><Ico n="sheet" s={13} /></Slot>
                <BarSelect $w={44} $ml={13}>Sht-1 [...<Stepper /></BarSelect>
                <BarSep $ml={8} />
                <Slot $w={22}><Ico n="pgrid" /></Slot>
                <Slot $w={20}><Ico n="pgridDown" /></Slot>
                <BarSelect $w={43} $ml={2} $off><span /><Chevron off /></BarSelect>
                <BarSep $ml={4} />
                <Slot $w={26}><Ico n="eyeBox" s={13} /></Slot>
                <Stepper />
                <Slot $w={16} $ml={5}><Ico n="docSearch" /></Slot>
                <Slot $w={20} $ml={3}><Ico n="peopleSearch" /></Slot>
                <Slot $w={20} $ml={2}><Ico n="magnify" s={12} /></Slot>
                <BarSelect $w={41} $ml={2}>58%<Stepper /></BarSelect>
                <Slot $w={16} $ml={7}><Ico n="purple" /></Slot>
                <Slot $w={20} $ml={1} $on><Ico n="diamond" s={17} /></Slot>
                <BarSelect $w={43} $ml={7} $off>Top/Plan<Chevron off /></BarSelect>
                <BarSep $ml={5} />
                <Slot $w={22}><Ico n="phone" /></Slot>
                <BarSelect $w={47} $off>0.00°</BarSelect>
                <Slot $w={16} $ml={3}><Ico n="plan2d" s={12} /></Slot>
                <BarSelect $w={40} $ml={7} $off>2D Plan<Chevron off /></BarSelect>
                <BarSep $ml={4} />
                <Slot $w={30}><Ico n="cloud" /><Chevron off /></Slot>
                <BarSep $ml={8} />
                <Slot $w={22}><Ico n="glasses" s={13} /></Slot>
                <Slot $w={11}><Chevron off /></Slot>
                <Slot $w={14}><Ico n="triDown" s={11} /></Slot>
            </ToolBar>
            <ToolBar $h={24}>
                <Slot $w={18} $ml={8}><Ico n="noPoly" /></Slot>
                <Slot $w={22} $on><Ico n="onePoly" /></Slot>
                <Slot $w={22}><Ico n="manyPoly" /></Slot>
                <BarSep $ml={8} />
                <Slot $w={24} $ml={2} $on><Ico n="objects" s={16} /></Slot>
                <BarSep $ml={6} />
                <Slot $w={23} $ml={1} $on><Ico n="marquee" /></Slot>
                <Slot $w={22}><Ico n="lasso" /></Slot>
                <Slot $w={20}><Ico n="polyMq" /></Slot>
                <BarSep $ml={8} />
                <Slot $w={23} $ml={3} $on><Ico n="deckSel" s={16} /></Slot>
                <HintText>Selection Tool: Rectangular Marquee Mode</HintText>
                <RightTools>
                    <Slot $w={26}><Ico n="zoomOff" s={18} /></Slot>
                    <Slot $w={30} $ml={4}><Ico n="gear" s={16} /><Chevron /></Slot>
                    <Slot $w={30} $ml={4}><Ico n="leaf" s={16} /><Chevron /></Slot>
                    <Slot $w={30} $ml={5}><Ico n="shapeSet" s={16} /><Chevron /></Slot>
                    <Slot $w={14} $ml={4}><Ico n="triDown" s={11} /></Slot>
                </RightTools>
            </ToolBar>
            <HRulerRow>
                <OriginBox>
                    <svg width="10" height="10" viewBox="0 0 10 10" fill="none" stroke="#111">
                        <circle cx="5" cy="5" r="2.5" strokeWidth="1.5" />
                        <path d="M5 0V3M5 7V10M0 5H3M7 5H10" />
                    </svg>
                </OriginBox>
                <HRulerTrack>
                    <HRulerCell $w={39} $bare />
                    {hLabels.map((t) => (
                        <HRulerCell key={t}>{t}</HRulerCell>
                    ))}
                </HRulerTrack>
                <RulerMarker />
            </HRulerRow>
        </>
    );
}

function DrawingCanvas() {
    return (
        <Canvas>
            <PageMargin>
                <PageSheet />
            </PageMargin>
            <Viewport>
                <ViewportCrop />
                <TitleBlock>
                    <Bubble>1</Bubble>
                    <TitleText>
                        <TitleMain>Plat 1 Top View</TitleMain>
                        <TitleScale>Scale: 1/2" = 1'-0"</TitleScale>
                    </TitleText>
                </TitleBlock>
            </Viewport>
            <CenterCross />
            <OutlineSheet />
            <HandleTick $top={180} />
            <HandleTick $top={274} />
            <SnapLine />
            <SnapPoint />
            <CursorMark>
                <svg width="9" height="14" viewBox="0 0 9 14">
                    <path d="M1 0V11L3.5 8.5 5.5 13 7 12.3 5 8H8.5Z" fill="#111" stroke="#fff" strokeWidth=".5" />
                </svg>
            </CursorMark>
            <SnapTip>Object</SnapTip>
        </Canvas>
    );
}

function ObjectInfo() {
    return (
        <>
            <PanelHeader>
                <CloseMark>✕</CloseMark>
                <HeaderTitle>Object Info - Shape</HeaderTitle>
                <MenuBars />
                <HelpMark>?</HelpMark>
            </PanelHeader>
            <TabRow>
                <PanelTab $w={41} $on>Shape</PanelTab>
                <PanelTab $w={39} $sep>Data</PanelTab>
                <PanelTab $w={41} $sep>Render</PanelTab>
            </TabRow>
            <InfoBody>
                <InfoHeading>Viewport</InfoHeading>
                <InfoFaded>Drawing Status</InfoFaded>
                <InfoRow $gap={4}><InfoButton>Update</InfoButton></InfoRow>
                <InfoRow $gap={3.5}><InfoLabel>Drawing Title:</InfoLabel><InfoField>Plat 1 Top View</InfoField></InfoRow>
                <InfoRow $gap={4}><InfoLabel>Drawing Number:</InfoLabel><InfoField>1</InfoField></InfoRow>
                <InfoRow $gap={4}><InfoLabel>Back Ref. Sheet No.:</InfoLabel></InfoRow>
                <InfoRow $gap={1}><InfoButton>Select Back References...</InfoButton></InfoRow>
                <InfoRow $gap={2.5}><InfoButton>Layers...</InfoButton></InfoRow>
                <InfoRow $gap={2}><InfoButton>Classes...</InfoButton></InfoRow>
                <InfoRow $gap={4}><InfoLabel>Scale:</InfoLabel><InfoField>1/2"=1'0"<Stepper /></InfoField></InfoRow>
                <InfoRow $gap={3.5}><InfoLabel $off>Custom Scale 1:</InfoLabel><InfoField $off>24.000</InfoField></InfoRow>
                <InfoRow $gap={3.5}><InfoLabel>Detail Level:</InfoLabel><InfoField>Medium<Stepper /></InfoField></InfoRow>
                <InfoRow $gap={1}>
                    <CheckBox><Ico n="check" s={7} /></CheckBox>
                    Display planar objects
                </InfoRow>
                <InfoRow $gap={5}><InfoLabel>Data Visualization:</InfoLabel><InfoField>{"<None>"}<Stepper /></InfoField></InfoRow>
                <InfoRow $gap={4}><InfoLabel>Camera:</InfoLabel><InfoField $plain>No</InfoField></InfoRow>
                <InfoRow $gap={2.5}><InfoLabel>View:</InfoLabel><InfoField>Top/Plan<Stepper /></InfoField></InfoRow>
                <InfoRow $gap={2.5}><InfoButton $off>Set View...</InfoButton></InfoRow>
                <InfoRow $gap={3.5}><InfoLabel>Background Render:</InfoLabel><InfoField>Wireframe<Stepper /></InfoField></InfoRow>
                <InfoRow $gap={2.5}><InfoButton>Background Render Settings...</InfoButton></InfoRow>
                <InfoRow $gap={3}><InfoLabel $off>RW Background:</InfoLabel><InfoField $off>None<Chevron off /></InfoField></InfoRow>
            </InfoBody>
            <NameRow>Name:<NameField>1/Sht-1</NameField></NameRow>
        </>
    );
}

function NavigationPanel() {
    return (
        <>
            <PanelHeader $h={13}>
                <CloseMark>✕</CloseMark>
                <HeaderTitle>Navigation - Sheet Layers</HeaderTitle>
                <MenuBars />
                <HelpMark>?</HelpMark>
            </PanelHeader>
            <NavToolbar>
                <NavTab><Ico n="mole" /></NavTab>
                <NavTab><Ico n="layersNav" s={13} /></NavTab>
                <NavTab $on><Ico n="sheet" s={14} /></NavTab>
                <NavTab><Ico n="classesNav" s={13} /></NavTab>
                <NavTab><Ico n="eyeBox" s={13} /></NavTab>
                <NavTab><Ico n="refNav" s={13} /></NavTab>
            </NavToolbar>
            <FilterRow>
                Filter:
                <FilterSelect>{"<All Layers>"}<Stepper /></FilterSelect>
            </FilterRow>
            <SearchWrap>
                <SearchBox><Ico n="search" s={10} />Search</SearchBox>
            </SearchWrap>
            <NavList>
                <TableHead>
                    <HeadCell $w={23} />
                    <HeadCell $w={62} $sep>Sheet Num...</HeadCell>
                    <HeadCell $w={116} $sep>Sheet Title</HeadCell>
                    <HeadCell $w={14} $sep>#</HeadCell>
                </TableHead>
                <TableRow>
                    <RowCell $w={24} $pl={6}><Ico n="pencilCheck" s={10} /></RowCell>
                    <RowCell $w={61} $bold>Sht-1</RowCell>
                    <RowCell $w={117} $pl={2}>Platform 1</RowCell>
                    <RowCell $w={14} $pl={3}>1</RowCell>
                </TableRow>
            </NavList>
        </>
    );
}

export default function App() {
    return (
        <Screen>
            <GlobalStyle />
            <CameraDot />
            <AppWindow>
                <Workspace>
                    <LeftPanels />
                    <Gutter $dark>
                        <GutterGrip $top={327} />
                    </Gutter>
                    <Center>
                        <TopBars />
                        <DrawArea>
                            <VRuler>
                                <VRulerCell $h={38}><VRulerLabel>1'-0"</VRulerLabel></VRulerCell>
                                {vLabels.map((t) => (
                                    <VRulerCell key={t}><VRulerLabel>{t}</VRulerLabel></VRulerCell>
                                ))}
                                <VRulerMarker />
                            </VRuler>
                            <DrawingCanvas />
                        </DrawArea>
                    </Center>
                    <Gutter />
                    <RightDock>
                        <ObjectInfo />
                        <Splitter />
                        <NavigationPanel />
                    </RightDock>
                </Workspace>
                <StatusBar>
                    For Help, press F1 or click the ? icon
                    <StatusRight>
                        <Coord $w={80}>X: -9.938"</Coord>
                        <Coord $w={78}>Y: 8.156"</Coord>
                        {snapButtons.map((b) => (
                            <SnapButton key={b.n} $on={b.on} $box={b.box}><Ico n={b.n} s={13} /></SnapButton>
                        ))}
                    </StatusRight>
                </StatusBar>
            </AppWindow>
        </Screen>
    );
}
